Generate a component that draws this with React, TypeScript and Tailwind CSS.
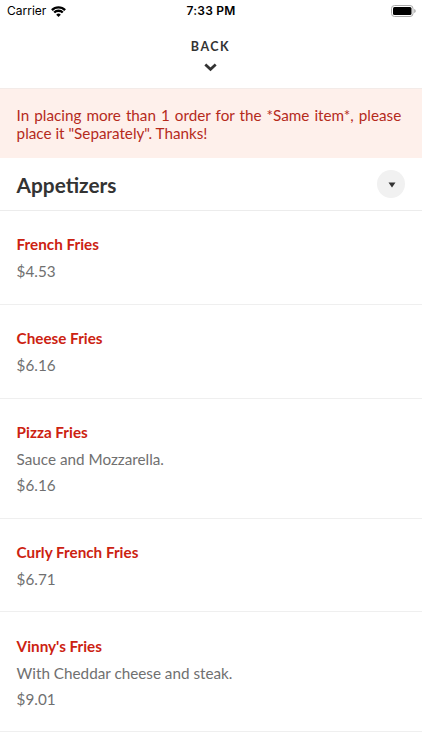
import { useState } from 'react';

interface MenuItem {
  name: string;
  description?: string;
  price: string;
}

const items: MenuItem[] = [
  { name: 'French Fries', price: '$4.53' },
  { name: 'Cheese Fries', price: '$6.16' },
  { name: 'Pizza Fries', description: 'Sauce and Mozzarella.', price: '$6.16' },
  { name: 'Curly French Fries', price: '$6.71' },
  { name: "Vinny's Fries", description: 'With Cheddar cheese and steak.', price: '$9.01' },
];

function StatusBar() {
  return (
    <div className="grid h-[22px] grid-cols-3 items-center pl-[7px] pr-[6px] font-['Inter',sans-serif] text-black">
      <div className="flex items-center gap-[5px]">
        <span className="text-[12px] leading-[22px]">Carrier</span>
        <svg width="15" height="11" viewBox="0 0 15 11" fill="none" stroke="currentColor" strokeWidth="2.4">
          <path d="M0.9 4.1a9.3 9.3 0 0 1 13.2 0" />
          <path d="M3.2 6.5a6.1 6.1 0 0 1 8.6 0" />
          <path d="M7.5 11 5.2 8.7a3.25 3.25 0 0 1 4.6 0Z" fill="currentColor" stroke="none" />
        </svg>
      </div>
      <div className="-ml-px text-center text-[12px] font-semibold leading-[22px] tracking-[0.2px]">7:33 PM</div>
      <svg className="justify-self-end" width="25" height="12" viewBox="0 0 25 12">
        <rect x="0.5" y="0.5" width="21.5" height="11" rx="3" fill="#fff" stroke="#aaa" />
        <rect x="2" y="2" width="18.5" height="8" rx="1.5" fill="#000" />
        <path d="M23.3 4v4c.8-.3 1.3-1.1 1.3-2s-.5-1.7-1.3-2Z" fill="#999" />
      </svg>
    </div>
  );
}

function MenuRow({ item }: { item: MenuItem }) {
  return (
    <li className="border-b border-[#efefef] px-[16.6px] pb-[19.2px] pt-[20.4px] leading-[26.3px]">
      <h3 className="mb-[0.6px] font-bold text-[#cc2211]">{item.name}</h3>
      {item.description && <p>{item.description}</p>}
      <p>{item.price}</p>
    </li>
  );
}

export default function App() {
  const [open, setOpen] = useState(true);

  return (
    <div className="h-[750px] overflow-hidden bg-white font-['Lato',sans-serif] text-[15.25px] text-[#707070]">
      <StatusBar />

      <button className="flex h-[66px] w-full flex-col items-center pr-[1px] pt-[17px] text-[#333]">
        <span className="text-[12.5px] font-bold leading-4 tracking-[1.5px]">BACK</span>
        <svg className="mt-[8px]" width="13" height="9" viewBox="0 0 13 9" fill="none" stroke="currentColor" strokeWidth="2.7">
          <path d="m1.3 1.4 5.2 4.9 5.2-4.9" />
        </svg>
      </button>

      <div className="h-[70px] border-t border-[#f3ebe8] bg-[#fef0eb] pl-[16.6px] pr-[20.8px] pt-[16.6px] text-justify leading-[18.3px] text-[#b52a1c]">
        In placing more than 1 order for the *Same item*, please place it "Separately". Thanks!
      </div>

      <section>
        <div className="flex h-[53px] items-center justify-between border-b border-[#ececec] pl-[16.6px] pr-[17px]">
          <h2 className="pt-px text-[20.8px] font-bold text-[#333]">Appetizers</h2>
          <button
            onClick={() => setOpen(!open)}
            className="flex size-[28px] items-center justify-center rounded-full bg-[#f1f1f1] pl-px pt-px text-[#333]"
          >
            <svg width="8" height="6" viewBox="0 0 8 6" fill="currentColor">
              <path d="M0.5 0.4h7L4 5.6Z" />
            </svg>
          </button>
        </div>
        {open && (
          <ul>
            {items.map((item) => (
              <MenuRow key={item.name} item={item} />
            ))}
          </ul>
        )}
      </section>
    </div>
  );
}
